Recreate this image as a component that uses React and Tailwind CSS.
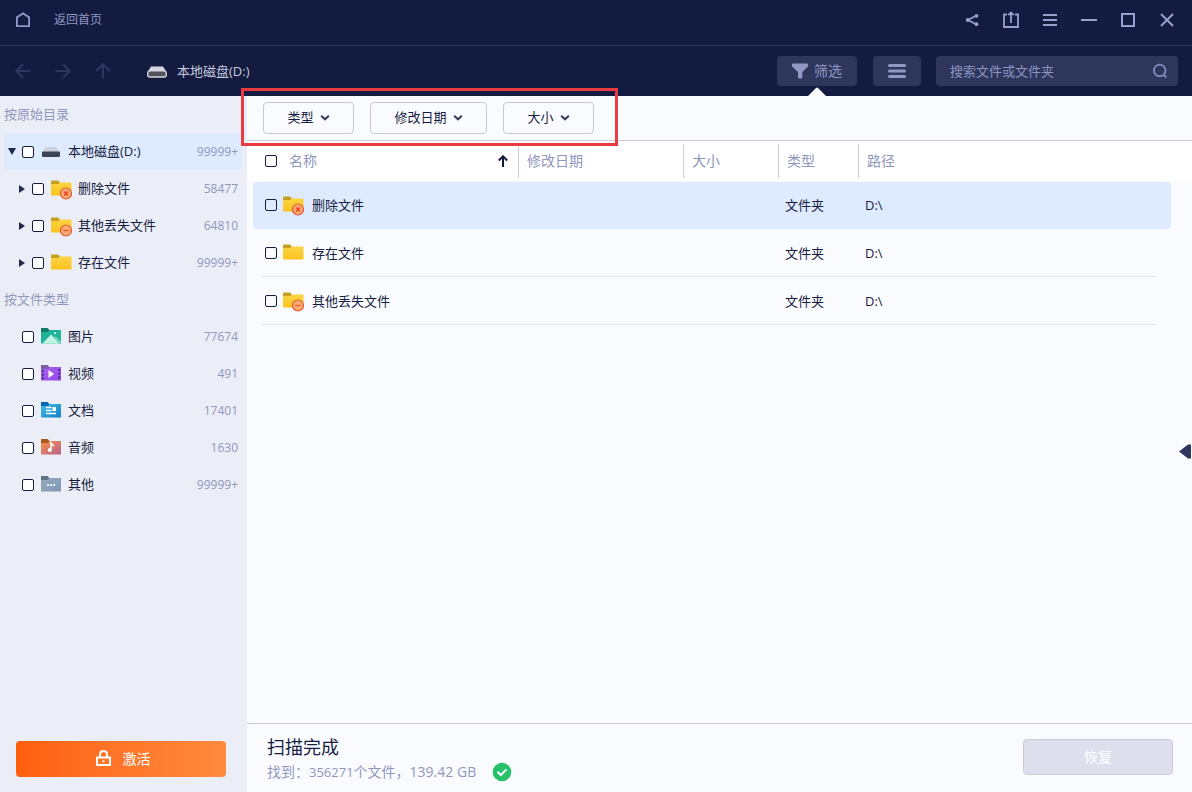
import { useState } from "react";

const directories = [
  { id: "deleted", label: "删除文件", count: "58477", badge: "x" },
  { id: "lost", label: "其他丢失文件", count: "64810", badge: "minus" },
  { id: "existing", label: "存在文件", count: "99999+" }
];

const fileTypes = [
  { id: "image", label: "图片", count: "77674" },
  { id: "video", label: "视频", count: "491" },
  { id: "document", label: "文档", count: "17401" },
  { id: "audio", label: "音频", count: "1630" },
  { id: "other", label: "其他", count: "99999+" }
];

const files = [
  { id: 1, name: "删除文件", type: "文件夹", path: "D:\\", badge: "x" },
  { id: 2, name: "存在文件", type: "文件夹", path: "D:\\" },
  { id: 3, name: "其他丢失文件", type: "文件夹", path: "D:\\", badge: "minus" }
];

const typeColors = {
  image: ["#0f7a63", "#1fae93", "#23b99c"],
  video: ["#7b5aa6", "#a862f2", "#9448e6"],
  document: ["#0b66b5", "#3fc0e2", "#1580c8"],
  audio: ["#a85a24", "#fb9045", "#b5628f"],
  other: ["#5f7486", "#96aabc", "#7f98b4"]
};

function HomeIcon() {
  return (
    <svg width="16" height="16" viewBox="0 0 16 16" fill="none" stroke="#8f98c8" strokeWidth="1.8">
      <path d="M1.9 14.1V5.2L8 1.4l6.1 3.8v8.9z" />
    </svg>
  );
}

function ArrowIcon({ rotate = "" }) {
  return (
    <svg width="16" height="16" viewBox="0 0 16 16" fill="none" stroke="#2f3761" strokeWidth="2" className={rotate}>
      <path d="M15.5 8H1.5M8 1.2L1.4 8L8 14.8" />
    </svg>
  );
}

function DriveLightIcon() {
  return (
    <svg width="20" height="12" viewBox="0 0 20 12">
      <path d="M4 .5h12l3.5 5.5H.5z" fill="#d6d7de" />
      <rect x="0" y="4.5" width="20" height="7.2" rx="3" fill="#d6d7de" />
      <rect x="1.4" y="5.5" width="17.2" height="4.8" rx="1.6" fill="#50535c" />
    </svg>
  );
}

function DriveDarkIcon() {
  return (
    <svg width="18" height="10" viewBox="0 0 18 10">
      <path d="M3.5 0h11L17.5 5H.5z" fill="#cfd2dc" />
      <rect x="0" y="4.5" width="18" height="5.5" rx="1" fill="#3f4453" />
    </svg>
  );
}

function FolderIcon({ badge }) {
  return (
    <svg width="22" height="22" viewBox="0 -2 22 22" className="shrink-0">
      <defs>
        <linearGradient id="folderFill" x1="0" y1="0" x2="0" y2="1">
          <stop offset="0" stopColor="#fad443" />
          <stop offset="1" stopColor="#fcc21f" />
        </linearGradient>
      </defs>
      <path d="M0 1.5Q0 .5 1 .5h6L9 2.5V5H0z" fill="#c4a01e" />
      <path d="M0 4h7l2-1.5h11q.5 0 .5.5v11.500q0 1-1 1H1q-1 0-1-1z" fill="url(#folderFill)" />
      {badge && <circle cx="15" cy="13.500" r="5.5" fill="#fdaa72" stroke="#e0592f" strokeWidth="1.2" />}
      {badge === "x" && <path d="M13 11.500l4 4M17 11.500l-4 4" stroke="#e8431f" strokeWidth="1.4" />}
      {badge === "minus" && <path d="M12.300 13.500h5.400" stroke="#e8592f" strokeWidth="1.3" />}
    </svg>
  );
}

function TypeIcon({ kind }) {
  const [tab, from, to] = typeColors[kind];
  const fill = `type-${kind}`;
  return (
    <svg width="20" height="18" viewBox="0 0 20 18" className="shrink-0">
      <defs>
        <linearGradient id={fill} x1="0" y1="0" x2="1" y2="1">
          <stop offset="0" stopColor={from} />
          <stop offset="1" stopColor={to} />
        </linearGradient>
      </defs>
      <path d="M0 0h6.500L9 2.500V5H0z" fill={tab} />
      <path d="M0 4h6.500L8.500 2H20v13.500H0z" fill={`url(#${fill})`} />
      {kind === "image" && (
        <>
          <path d="M1.500 15.500L10 6.500l8.500 9z" fill="#c3f3e3" />
          <path d="M13 9.700l1.500-1.500L20 13.500v2h-1.500z" fill="#6bd6bb" />
          <circle cx="14" cy="5" r="1.100" fill="#d8fff3" />
        </>
      )}
      {kind === "video" && (
        <>
          <path d="M7.500 5v8l5.500-4z" fill="#fff" />
          <path d="M1.800 5v10M18.200 4v11" stroke="#4c2887" strokeWidth="2" strokeDasharray="2 1.600" />
        </>
      )}
      {kind === "document" && (
        <>
          <path d="M5 5.500h5.500M5 8.500h5.500M5 11.500h10" stroke="#fff" strokeWidth="1.400" />
          <rect x="11.500" y="5" width="3.500" height="4" fill="#fff" />
        </>
      )}
      {kind === "audio" && (
        <>
          <path d="M10 11V4l3 3" fill="none" stroke="#fff" strokeWidth="1.600" />
          <ellipse cx="8.800" cy="11" rx="2" ry="1.900" fill="#fff" />
        </>
      )}
      {kind === "other" && (
        <g fill="#e8eff5">
          <rect x="6" y="8" width="2" height="2" />
          <rect x="9" y="8" width="2" height="2" />
          <rect x="12" y="8" width="2" height="2" />
        </g>
      )}
    </svg>
  );
}

function Checkbox({ label, className = "bg-white" }) {
  return (
    <input
      type="checkbox"
      aria-label={label}
      className={`size-3 shrink-0 appearance-none rounded-xs border border-[#161c3f] checked:bg-[#161c3f] ${className}`}
    />
  );
}

function WindowButton({ label, children }) {
  return (
    <button type="button" aria-label={label} className="flex h-10 w-[39px] items-center justify-center">
      <svg width="18" height="18" viewBox="0 0 18 18" fill="none" stroke="#979fca" strokeWidth="2">
        {children}
      </svg>
    </button>
  );
}

function TitleBar() {
  return (
    <div className="flex h-[46px] items-start justify-between border-b border-[#2c3259] pr-1.5 pl-[15px]">
      <a href="#home" className="flex h-10 items-center gap-[23px] text-xs text-[#9098c3]">
        <HomeIcon />
        返回首页
      </a>
      <div className="flex">
        <WindowButton label="分享">
          <path d="M13.500 4.500L5 9l8.500 4.500" strokeWidth="1.800" />
          <g fill="#979fca" stroke="none">
            <circle cx="13.500" cy="4.800" r="1.900" />
            <circle cx="4.800" cy="9" r="2.100" />
            <circle cx="13.500" cy="13.200" r="1.900" />
          </g>
        </WindowButton>
        <WindowButton label="导出">
          <path d="M5 3.500H2v12.500h14V3.500h-3M9 12V1.500M6.200 4.200L9 1.400l2.800 2.800" strokeWidth="1.800" />
        </WindowButton>
        <WindowButton label="菜单">
          <path d="M2 4h14M2 9h14M2 14h14" />
        </WindowButton>
        <WindowButton label="最小化">
          <path d="M1 9h16" />
        </WindowButton>
        <WindowButton label="最大化">
          <path d="M3 3h12v12H3z" />
        </WindowButton>
        <WindowButton label="关闭">
          <path d="M3 3l12 12M15 3L3 15" />
        </WindowButton>
      </div>
    </div>
  );
}

function Toolbar({ query, onQuery }) {
  return (
    <div className="flex h-[50px] items-center pr-[14px] pl-[15px]">
      <div className="flex gap-6">
        <button type="button" aria-label="后退"><ArrowIcon /></button>
        <button type="button" aria-label="前进"><ArrowIcon rotate="rotate-180" /></button>
        <button type="button" aria-label="上一级"><ArrowIcon rotate="rotate-90" /></button>
      </div>
      <div className="ml-9 flex items-center gap-[10px] pt-0.5 text-[13px] text-[#c6c9dc]">
        <DriveLightIcon />
        本地磁盘(D:)
      </div>
      <div className="ml-auto flex">
        <button type="button" className="relative flex h-[30px] w-20 items-center justify-center gap-1.5 rounded-sm bg-[#2f365c] text-sm text-[#8d95c0]">
          <svg width="16" height="16" viewBox="0 0 16 16" fill="#9098c3">
            <path d="M1 .5h14q1 0 1 1v2L10.300 9v5.500q0 1-1 1H7q-1 0-1-1V9L0 3.500v-2q0-1 1-1z" />
          </svg>
          筛选
          <svg width="18" height="9" viewBox="0 0 18 9" className="absolute -bottom-[10px] left-[31px]">
            <path d="M0 9L8 1q1-1 2 0l8 8z" fill="#fafbff" />
          </svg>
        </button>
        <button type="button" aria-label="列表视图" className="ml-4 flex h-[30px] w-12 items-center justify-center rounded-sm bg-[#2f365c]">
          <svg width="18" height="16" viewBox="0 0 18 16" stroke="#9098c3" strokeWidth="3" strokeLinecap="round">
            <path d="M1.500 2.500h15M1.500 8h15M1.500 13.500h15" />
          </svg>
        </button>
        <label className="ml-[15px] flex h-[30px] w-[242px] items-center rounded-sm bg-[#2f365c] pr-2.5 pl-[14px]">
          <input
            type="text"
            aria-label="搜索"
            placeholder="搜索文件或文件夹"
            value={query}
            onChange={(e) => onQuery(e.target.value)}
            className="min-w-0 flex-1 bg-transparent pt-0.5 text-[13px] text-[#9ba3cf] outline-none placeholder:text-[#8d95c0]"
          />
          <svg width="16" height="16" viewBox="0 0 16 16" fill="none" stroke="#7d85b2" strokeWidth="2">
            <circle cx="7.700" cy="7.500" r="5.800" />
            <path d="M11.500 11.500l2.800 3" />
          </svg>
        </label>
      </div>
    </div>
  );
}

function Sidebar() {
  return (
    <aside className="flex w-[247px] shrink-0 flex-col bg-[#eceef7] text-[13px] text-[#171d40]">
      <h2 className="flex h-[37px] items-center pl-1 text-[#8f97bd]">按原始目录</h2>
      <ul>
        <li className="mr-[5px] ml-1 flex h-[37px] items-center rounded-xs bg-[#deeafe] pr-1 pl-1">
          <svg width="8" height="7" viewBox="0 0 8 7"><path d="M0 0h8L4 7z" fill="#22284d" /></svg>
          <span className="ml-1.5 flex items-center">
            <Checkbox label="本地磁盘(D:)" />
          </span>
          <span className="ml-2 flex w-[26px]"><DriveDarkIcon /></span>
          <span>本地磁盘(D:)</span>
          <span className="ml-auto text-xs text-[#8f97bd]">99999+</span>
        </li>
        {directories.map((dir) => (
          <li key={dir.id} className="flex h-[37px] items-center pr-[9px] pl-[19px]">
            <svg width="6" height="8" viewBox="0 0 6 8"><path d="M0 0v8l6-4z" fill="#22284d" /></svg>
            <span className="ml-[7px] flex items-center">
              <Checkbox label={dir.label} />
            </span>
            <span className="ml-[7px] flex w-[27px]"><FolderIcon badge={dir.badge} /></span>
            <span>{dir.label}</span>
            <span className="ml-auto text-xs text-[#8f97bd]">{dir.count}</span>
          </li>
        ))}
      </ul>
      <h2 className="flex h-[37px] items-center pl-1 text-[#8f97bd]">按文件类型</h2>
      <ul>
        {fileTypes.map((type) => (
          <li key={type.id} className="flex h-[37px] items-center pr-[9px] pl-[22px]">
            <Checkbox label={type.label} />
            <span className="ml-[7px] flex w-[27px]"><TypeIcon kind={type.id} /></span>
            <span>{type.label}</span>
            <span className="ml-auto text-xs text-[#8f97bd]">{type.count}</span>
          </li>
        ))}
      </ul>
      <button
        type="button"
        className="mt-auto mr-[21px] mb-[15px] ml-4 flex h-9 items-center justify-center gap-3 rounded-sm bg-linear-to-r from-[#ff5f0c] to-[#ff8a3d] pl-1 text-sm text-white"
      >
        <svg width="15" height="18" viewBox="0 0 15 18" fill="none" stroke="#fff" strokeWidth="2">
          <path d="M1 7.500h13V15H1zM4 7.500V4.800Q4 1 7.500 1T11 4.800v2.700" />
          <path d="M6.500 11.300h2" />
        </svg>
        激活
      </button>
    </aside>
  );
}

function FilterButton({ width, children }) {
  return (
    <button
      type="button"
      className={`flex h-8 items-center justify-center gap-1.5 rounded-sm border border-[#c6c9da] bg-[#fafbff] text-[13px] text-[#171d40] ${width}`}
    >
      {children}
      <svg width="10" height="8" viewBox="0 0 10 8" fill="none" stroke="#353a5c" strokeWidth="2">
        <path d="M1.200 1.700L5 5.300l3.800-3.600" />
      </svg>
    </button>
  );
}

function HeaderCell({ children }) {
  return (
    <th className="p-0 font-normal">
      <div className="flex h-[34px] items-center border-l border-[#c9ccdc] pl-2">{children}</div>
    </th>
  );
}

function FileTable({ selected, onSelect }) {
  return (
    <table className="w-full table-fixed border-collapse text-left">
      <colgroup>
        <col className="w-[271px]" />
        <col className="w-[165px]" />
        <col className="w-[95px]" />
        <col className="w-20" />
        <col />
      </colgroup>
      <thead className="bg-white text-sm text-[#8f97bd]">
        <tr className="h-10">
          <th className="p-0 font-normal">
            <div className="flex items-center pr-[9px] pl-[18px]">
              <Checkbox label="全选" />
              <span className="ml-3">名称</span>
              <svg width="12" height="12" viewBox="0 0 12 12" fill="none" stroke="#12183a" strokeWidth="2" className="ml-auto">
                <path d="M6 12V1.500M1.800 5.500L6 1.300l4.200 4.200" />
              </svg>
            </div>
          </th>
          <HeaderCell>修改日期</HeaderCell>
          <HeaderCell>大小</HeaderCell>
          <HeaderCell>类型</HeaderCell>
          <HeaderCell>路径</HeaderCell>
        </tr>
      </thead>
      <tbody className="text-[13px] text-[#171d40]">
        {files.map((file) => {
          const active = file.id === selected;
          const fill = active ? "bg-[#deeafe]" : "";
          const line = active ? "border-transparent" : "border-[#e3e5ee]";
          return (
            <tr key={file.id} onClick={() => onSelect(file.id)}>
              <td className="p-0 pt-px">
                <div className={`ml-1.5 rounded-l-sm pl-2 ${fill}`}>
                  <div className={`flex h-[47px] items-center border-b pl-1 ${line}`}>
                    <Checkbox label={file.name} className="bg-transparent" />
                    <span className="ml-1.5 flex w-[29px]"><FolderIcon badge={file.badge} /></span>
                    <span className="pt-px">{file.name}</span>
                  </div>
                </div>
              </td>
              <td className="p-0 pt-px"><div className={`h-[47px] border-b ${fill} ${line}`} /></td>
              <td className="p-0 pt-px"><div className={`h-[47px] border-b ${fill} ${line}`} /></td>
              <td className="p-0 pt-px">
                <div className={`flex h-[47px] items-center border-b pt-px pl-[7px] ${fill} ${line}`}>{file.type}</div>
              </td>
              <td className="p-0 pt-px">
                <div className={`mr-[21px] rounded-r-sm pr-[14px] ${fill}`}>
                  <div className={`flex h-[47px] items-center border-b pt-px pl-[7px] ${line}`}>{file.path}</div>
                </div>
              </td>
            </tr>
          );
        })}
      </tbody>
    </table>
  );
}

function Footer() {
  return (
    <footer className="flex h-[69px] items-center justify-between border-t border-[#c9ccdc] pr-[19px] pl-5">
      <div className="pt-0.5">
        <p className="text-lg leading-[26px] text-[#171d40]">扫描完成</p>
        <div className="flex items-center gap-4">
          <p className="text-sm leading-6 text-[#8f97bd]">
            找到：<span className="text-[13px]">356271</span>个文件，139.42 GB
          </p>
          <svg width="20" height="20" viewBox="0 0 20 20" fill="none">
            <circle cx="10" cy="10" r="9.300" fill="#27c16b" />
            <path d="M5.500 9.800l3.300 3.200 5.700-5.600" stroke="#fff" strokeWidth="2" />
          </svg>
        </div>
      </div>
      <button type="button" disabled className="mb-0.5 h-9 w-[150px] rounded-sm border border-[#c9ccdf] bg-[#dddfec] text-sm text-white">
        恢复
      </button>
    </footer>
  );
}

export default function App() {
  const [query, setQuery] = useState("");
  const [selected, setSelected] = useState(1);

  return (
    <div className="flex min-h-screen flex-col bg-[#fafbff] font-['Open_Sans','Noto_Sans_CJK_SC',sans-serif]">
      <header className="bg-[#141b41]">
        <TitleBar />
        <Toolbar query={query} onQuery={setQuery} />
      </header>
      <div className="flex flex-1">
        <Sidebar />
        <main className="relative flex min-w-0 flex-1 flex-col">
          <div className="flex h-[45px] items-center gap-4 border-b border-[#c9ccdc] pl-4">
            <FilterButton width="w-[91px]">类型</FilterButton>
            <FilterButton width="w-[117px]">修改日期</FilterButton>
            <FilterButton width="w-[91px]">大小</FilterButton>
          </div>
          <FileTable selected={selected} onSelect={setSelected} />
          <div className="flex-1" />
          <Footer />
          <div className="pointer-events-none absolute -top-2 -left-1.5 h-[58px] w-[377px] border-3 border-[#ea3c40]" />
          <button type="button" aria-label="展开预览" className="absolute top-[348px] right-px">
            <svg width="12" height="15" viewBox="0 0 12 15">
              <path d="M0 7.500L9 0.500h3v14H9z" fill="#2f365f" />
            </svg>
          </button>
        </main>
      </div>
    </div>
  );
}
